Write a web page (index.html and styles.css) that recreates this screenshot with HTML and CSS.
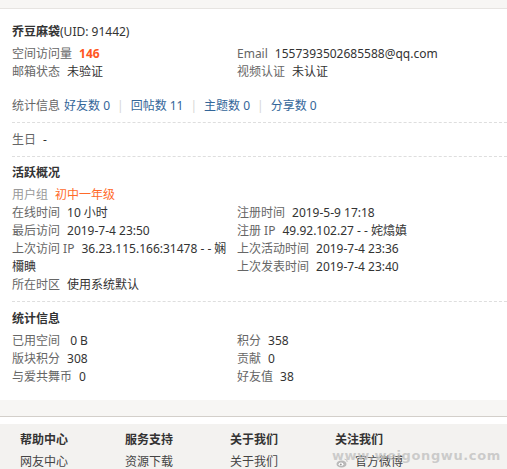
FILE: index.html
```html
<!DOCTYPE html>
<html lang="zh-CN">
<head>
<meta charset="utf-8">
<title>个人资料</title>
<link rel="stylesheet" href="styles.css">
</head>
<body>
<div class="topbar"></div>
<div class="panel">
  <div class="sec sec-first">
    <h2 class="name"><b>乔豆麻袋</b>(UID: 91442)</h2>
    <ul class="pf">
      <li><em>空间访问量</em><strong class="hot">146</strong></li>
      <li><em>Email</em>1557393502685588@qq.com</li>
      <li><em>邮箱状态</em>未验证</li>
      <li><em>视频认证</em>未认证</li>
    </ul>
    <p class="counts"><em class="lbl">统计信息</em><a>好友数 0</a><span class="pipe">|</span><a>回帖数 11</a><span class="pipe">|</span><a>主题数 0</a><span class="pipe">|</span><a>分享数 0</a></p>
  </div>
  <div class="sec sec-bday">
    <ul class="pf one">
      <li><em>生日</em>-</li>
    </ul>
  </div>
  <div class="sec sec-active">
    <h3>活跃概况</h3>
    <ul class="pf">
      <li class="full"><em class="light">用户组</em><span class="grp">初中一年级</span></li>
      <li><em>在线时间</em>10 小时</li>
      <li><em>注册时间</em>2019-5-9 17:18</li>
      <li><em>最后访问</em>2019-7-4 23:50</li>
      <li><em>注册 IP</em>49.92.102.27 - - 姹熻嫃</li>
      <li class="tall"><em>上次访问 IP</em>36.23.115.166:31478 - - 娴檷睓</li>
      <li><em>上次活动时间</em>2019-7-4 23:36</li>
      <li><em>上次发表时间</em>2019-7-4 23:40</li>
      <li class="c1"><em>所在时区</em>使用系统默认</li>
    </ul>
  </div>
  <div class="sec sec-stat">
    <h3>统计信息</h3>
    <ul class="pf">
      <li><em>已用空间</em> 0 B</li>
      <li><em>积分</em>358</li>
      <li><em>版块积分</em>308</li>
      <li><em>贡献</em>0</li>
      <li><em>与爱共舞币</em>0</li>
      <li><em>好友值</em>38</li>
    </ul>
  </div>
</div>
<div class="band"></div>
<div class="gap"></div>
<div class="footer">
  <div class="fcol"><h4>帮助中心</h4><a>网友中心</a></div>
  <div class="fcol"><h4>服务支持</h4><a>资源下载</a></div>
  <div class="fcol"><h4>关于我们</h4><a>关于我们</a></div>
  <div class="fcol"><h4>关注我们</h4><a class="wb"><svg class="wbicon" width="12" height="10" viewBox="0 0 12 10"><ellipse cx="5.5" cy="6" rx="5" ry="3.6" fill="#b9b9b9"/><ellipse cx="5" cy="6.3" rx="2.4" ry="1.8" fill="#fff"/><circle cx="4.8" cy="6.4" r="1" fill="#9a9a9a"/><path d="M8.5 1.2 A2.6 2.6 0 0 1 11.2 4" stroke="#c4c4c4" stroke-width="1" fill="none"/></svg>官方微博</a></div>
  <div class="wm">www.weigongwu.com</div>
</div>
</body>
</html>
```

FILE: styles.css
```css
* { box-sizing: border-box; }
html, body { margin: 0; padding: 0; }
body {
  width: 507px;
  height: 469px;
  overflow: hidden;
  font-family: "Noto Sans", "Noto Sans CJK SC", sans-serif;
  font-size: 12px;
  line-height: 18px;
  color: #333;
  background: #fff;
}
.topbar {
  height: 9px;
  background: #f7f6f4;
  border-bottom: 1px solid #e6e4e1;
}
.panel {
  background: #fff;
  padding-left: 12px;
}
.sec {
  border-bottom: 1px dashed #dedede;
  padding: 8px 0 7px;
}
.sec-first { padding-top: 14px; }
.sec-active { padding-top: 7px; }
.sec-stat { border-bottom: 0; padding-bottom: 14px; }
.name {
  margin: 0;
  font-size: 12px;
  font-weight: normal;
  line-height: 18px;
  color: #333;
}
.name b { font-weight: bold; }
h3 {
  margin: 0;
  font-size: 12px;
  line-height: 18px;
  font-weight: bold;
  color: #333;
}
.pf {
  list-style: none;
  margin: 4px 0 0;
  padding: 0;
  display: grid;
  grid-template-columns: 225px 1fr;
}
.pf.one { margin-top: 0; }
.pf li {
  line-height: 18px;
  color: #333;
}
.pf li.full { grid-column: 1 / 3; }
.pf li.tall { grid-row: span 2; padding-right: 3px; }
.pf li.c1 { grid-column: 1; }
.pf em {
  font-style: normal;
  color: #666;
  margin-right: 7px;
}
.pf em.light { color: #999; }
.hot { color: #ff5722; font-weight: bold; }
.grp { color: #ff6a2a; }
.counts {
  margin: 16px 0 0;
  line-height: 18px;
  color: #333;
}
.counts .lbl {
  font-style: normal;
  color: #666;
  margin-right: 4px;
}
.counts a { color: #336699; }
.pipe {
  color: #d6d6d6;
  margin: 0 7px;
}
.band {
  height: 17px;
  background: #f7f6f4;
  border-bottom: 1px solid #d3cfca;
}
.gap { height: 7px; background: #fff; }
.footer {
  position: relative;
  background: #f3f2f0;
  height: 45px;
  padding: 7px 0 0 20px;
  display: flex;
}
.fcol {
  width: 105px;
  display: flex;
  flex-direction: column;
  gap: 4px;
}
.fcol h4 {
  margin: 0;
  font-size: 12px;
  line-height: 18px;
  font-weight: bold;
  color: #333;
}
.fcol a {
  color: #444;
  line-height: 18px;
  display: flex;
  align-items: center;
}
.wbicon { margin: 2px 7px 0 1px; }
.wm {
  position: absolute;
  left: 332px;
  top: 24px;
  font-family: "DejaVu Sans", sans-serif;
  font-weight: bold;
  font-size: 13px;
  letter-spacing: 0.6px;
  color: rgba(190, 190, 190, 0.75);
  line-height: 16px;
  pointer-events: none;
}
```
